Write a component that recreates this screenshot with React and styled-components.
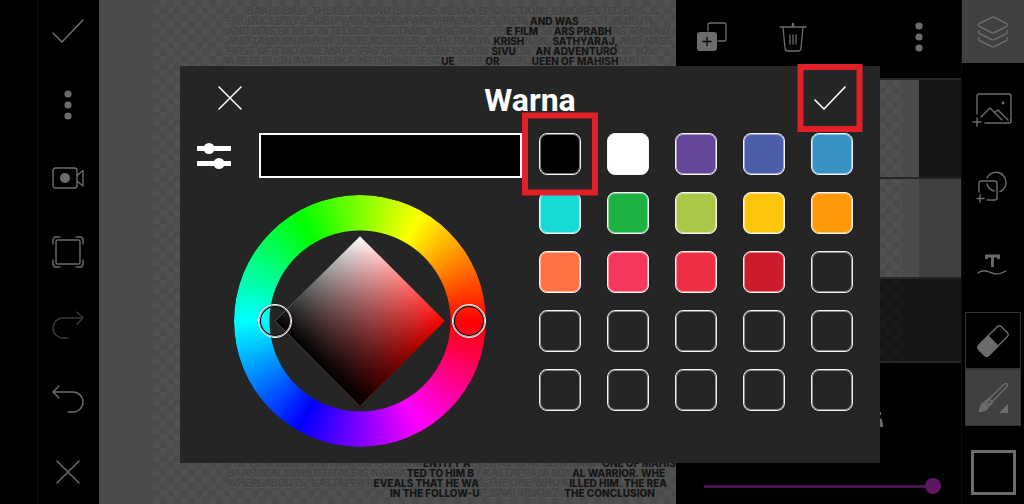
import React, { useState } from "react";
import styled, { createGlobalStyle, css } from "styled-components";

const BodyStyle = createGlobalStyle`
  * {
    box-sizing: border-box;
  }

  body {
    margin: 0;
    background-color: #000;
    color: #fff;
    font-family: Roboto, sans-serif;
  }
`;

const checker = css`
  background-image: conic-gradient(
    ${(p) => p.$light || "#515151"} 25%,
    transparent 0 50%,
    ${(p) => p.$light || "#515151"} 0 75%,
    transparent 0
  );
  background-size: 14px 14px;
`;

const Page = styled.div`
  position: relative;
  display: flex;
  height: 100vh;
  min-height: 504px;
  overflow: hidden;
`;

const Gutter = styled.div`
  flex: 0 0 38px;
  border-right: 1px solid #0c0c0c;
`;

const Toolbar = styled.nav`
  flex: 0 0 61px;
  display: flex;
  flex-direction: column;
  align-items: center;
  justify-content: space-between;
  padding: 11px 2px 12px 0;
`;

const IconButton = styled.button`
  position: relative;
  display: flex;
  align-items: center;
  justify-content: center;
  width: ${(p) => p.$size || 40}px;
  height: ${(p) => p.$size || 40}px;
  padding: 0;
  border: 0;
  background: none;
  color: ${(p) => p.$color || "#6c6c6c"};
  cursor: pointer;

  svg {
    display: block;
    flex: none;
  }
`;

const Canvas = styled.main`
  flex: 1;
  min-width: 0;
  display: flex;
  background-color: #4b4b4b;
`;

const Artboard = styled.div`
  flex: 1;
  min-width: 0;
  margin-left: 54px;
  padding: 6px 0 6px 74px;
  display: flex;
  flex-direction: column;
  justify-content: space-between;
  ${checker}
`;

const Paragraph = styled.p`
  margin: 0;
  font: 700 10px/10px Inter, sans-serif;
  color: #454545;
  text-shadow: 0 1px #5a5a5a;
`;

const Line = styled.span`
  display: flex;
  padding-left: ${(p) => p.$indent || 0}px;
  white-space: pre;
`;

const Ink = styled.span`
  font-weight: 800;
  color: #151515;
  text-shadow: none;
`;

const Panel = styled.aside`
  flex: 0 0 285px;
  display: flex;
  flex-direction: column;
  background-color: #000;
`;

const PanelBar = styled.div`
  flex: 0 0 78px;
  display: flex;
  align-items: flex-start;
  padding: 17px 22px 0 16px;
`;

const Spacer = styled.div`
  flex: ${(p) => (p.$width ? `0 0 ${p.$width}px` : "1")};
`;

const LayerRow = styled.div`
  height: ${(p) => p.$height}px;
  display: flex;
  border-top: 2px solid #262626;
  background-color: ${(p) => (p.$active ? "#404040" : "#161616")};
`;

const Thumb = styled.div`
  width: 243px;
  padding-right: 17px;
  background-color: ${(p) => (p.$empty ? "#161616" : "#4b4b4b")};
`;

const ThumbArt = styled.div`
  height: 100%;
  ${checker}
`;

const PanelFooter = styled.div`
  flex: 1;
  display: flex;
  flex-direction: column;
  justify-content: space-between;
  padding: 44px 20px 10px 28px;
  border-top: 2px solid #262626;
`;

const BrushOptions = styled.div`
  display: flex;
  padding-left: 163px;
`;

const Range = styled.input`
  appearance: none;
  width: 100%;
  height: 16px;
  margin: 0;
  background: linear-gradient(#4a124c, #4a124c) center / 100% 3px no-repeat;

  &::-webkit-slider-thumb {
    appearance: none;
    width: 16px;
    height: 16px;
    border-radius: 50%;
    background-color: #5c1760;
  }
`;

const Tools = styled.nav`
  flex: 0 0 63px;
  display: flex;
  flex-direction: column;
  align-items: center;
  border-left: 1px solid #0c0c0c;
  background-color: #000;
`;

const LayersTab = styled(IconButton)`
  width: 100%;
  height: 63px;
  background-color: #404040;
`;

const ToolList = styled.div`
  flex: 1;
  display: flex;
  flex-direction: column;
  justify-content: space-around;
  padding: 8px 2px 8px 0;
`;

const ToolBox = styled(IconButton)`
  width: 56px;
  height: 57px;
  border: 1px solid #333;
  background-color: ${(p) => (p.$active ? "#404040" : "#000")};
`;

const ActiveColor = styled.button`
  width: 45px;
  height: 45px;
  margin: 24px 0 9px;
  border: 3px solid #6c6c6c;
  background-color: #000;
`;

const Overlay = styled.div`
  position: absolute;
  inset: 0;
  display: grid;
  place-items: center;
  padding: 25px 0 0 36px;
`;

const Dialog = styled.section`
  width: 700px;
  max-width: 100%;
  background-color: #252525;
`;

const DialogHeader = styled.header`
  display: grid;
  grid-template-columns: 1fr auto 1fr;
  align-items: start;
  height: 67px;
  padding: 9px 27px 0;

  > :last-child {
    justify-self: end;
  }
`;

const Title = styled.h1`
  margin: 0;
  font: 700 32px/50px Roboto, sans-serif;
`;

const DialogBody = styled.div`
  display: flex;
  gap: 17px;
  padding: 0 27px 16px 17px;
`;

const Mixer = styled.div`
  flex: 1;
  display: flex;
  flex-direction: column;
  align-items: center;
  gap: 17px;
`;

const PreviewRow = styled.div`
  display: flex;
  align-items: center;
  gap: 28px;
  width: 100%;
`;

const Preview = styled.div`
  flex: 1;
  height: 45px;
  border: 2px solid #fff;
`;

const Wheel = styled.div`
  position: relative;
  display: grid;
  place-items: center;
  width: 252px;
  height: 252px;
`;

const HueRing = styled.div`
  position: absolute;
  inset: 0;
  border-radius: 50%;
  background: conic-gradient(
    from 90deg,
    #f00,
    #f0f,
    #00f,
    #0ff,
    #0f0,
    #ff0,
    #f00
  );
  mask: radial-gradient(circle, transparent 90px, #000 91px);
`;

const Shade = styled.div`
  width: 120px;
  height: 120px;
  background: linear-gradient(to top, #000, transparent),
    linear-gradient(to right, #fff, #f00);
  transform: rotate(45deg);
`;

const Handle = styled.button`
  position: absolute;
  top: 109px;
  ${(p) => p.$side}: ${(p) => (p.$side === "left" ? 24 : 0)}px;
  width: 34px;
  height: 34px;
  padding: 0;
  border: 1px solid #fff;
  border-radius: 50%;
  background: none;
  box-shadow: inset 0 0 0 1px #bbb, inset 0 0 0 2px #000;
`;

const Swatches = styled.div`
  display: grid;
  grid-template-columns: repeat(5, 42px);
  grid-auto-rows: 42px;
  gap: 17px 26px;
`;

const Swatch = styled.button`
  position: relative;
  padding: 0;
  border: 1px solid #f4f4f4;
  border-radius: 8px;
  box-shadow: inset 0 0 0 1px rgba(255, 255, 255, 0.45);
  background-color: ${(p) => p.$color || "transparent"};
  z-index: ${(p) => (p.$raised ? 1 : 0)};
`;

// red marker frame around a control
const Marker = styled.span`
  position: absolute;
  top: 50%;
  left: 50%;
  width: ${(p) => p.$width}px;
  height: ${(p) => p.$height}px;
  border: 6px solid #e32028;
  transform: translate(-50%, -50%);
  pointer-events: none;
`;

const Icon = ({ w, h, stroke = 1.4, children }) => (
  <svg
    width={w}
    height={h}
    viewBox={`0 0 ${w} ${h}`}
    fill="none"
    stroke="currentColor"
    strokeWidth={stroke}
    strokeLinecap="round"
    strokeLinejoin="round"
    aria-hidden="true"
  >
    {children}
  </svg>
);

const Check = () => (
  <Icon w={32} h={24} stroke={1.6}>
    <path d="M1 14 10 23 31 1" />
  </Icon>
);

const Close = () => (
  <Icon w={24} h={24} stroke={1.5}>
    <path d="M1 1 23 23M23 1 1 23" />
  </Icon>
);

const Dots = () => (
  <Icon w={8} h={30}>
    <g fill="currentColor" stroke="none">
      <circle cx="4" cy="4" r="3.6" />
      <circle cx="4" cy="15" r="3.6" />
      <circle cx="4" cy="26" r="3.6" />
    </g>
  </Icon>
);

const Camera = () => (
  <Icon w={32} h={22}>
    <rect x="1" y="1" width="24" height="20" rx="2.5" />
    <circle cx="13" cy="11" r="5" fill="currentColor" stroke="none" />
    <path d="M25.500 8 31 3.500V19L25.500 14.500" />
  </Icon>
);

const Frame = () => (
  <Icon w={32} h={32}>
    <rect x="4" y="4" width="24" height="24" rx="1.500" />
    <path d="M1 8V4a3 3 0 0 1 3-3h4M24 1h4a3 3 0 0 1 3 3v4M31 24v4a3 3 0 0 1-3 3h-4M8 31H4a3 3 0 0 1-3-3v-4" />
  </Icon>
);

const Redo = () => (
  <Icon w={32} h={28}>
    <path d="M16 27h-5A10 10 0 0 1 11 7h20M25 1l6 6-6 6" />
  </Icon>
);

const Undo = () => (
  <Icon w={32} h={28}>
    <path d="M16 27h5A10 10 0 0 0 21 7H1M7 1 1 7l6 6" />
  </Icon>
);

const AddLayer = () => (
  <Icon w={30} h={30} stroke={1.3}>
    <path d="M11 9V3a2 2 0 0 1 2-2h14a2 2 0 0 1 2 2v14a2 2 0 0 1-2 2h-6" />
    <rect x="0" y="10" width="20" height="19" rx="3" fill="currentColor" stroke="none" />
    <path d="M10 15.500v8M6 19.500h8" stroke="#000" />
  </Icon>
);

const Trash = () => (
  <Icon w={28} h={30} stroke={1.3}>
    <path d="M1 5h26M4 5l2 21a3 3 0 0 0 3 3h10a3 3 0 0 0 3-3L24 5" />
    <path d="M14 2v2" strokeWidth="2.400" />
    <path d="M11 13v9M14 13v9M17 13v9" />
  </Icon>
);

const Layers = () => (
  <Icon w={32} h={32}>
    <path d="M14.500 1.500a3 3 0 0 1 3 0l12 6q2.500 1.500 0 3l-12 6a3 3 0 0 1-3 0l-12-6q-2.500-1.500 0-3z" />
    <path d="M2.500 14.500q-2.500 1.500 0 3l12 6a3 3 0 0 0 3 0l12-6q2.500-1.500 0-3" />
    <path d="M2.500 21.500q-2.500 1.500 0 3l12 6a3 3 0 0 0 3 0l12-6q2.500-1.500 0-3" />
  </Icon>
);

const AddImage = () => (
  <Icon w={40} h={34}>
    <path d="M5 21V3a2 2 0 0 1 2-2h30a2 2 0 0 1 2 2v25a2 2 0 0 1-2 2H13" />
    <path d="M9 24l9-9 12 12M23 19l3-2 10 10M5 25v8M1 29h8" />
    <circle cx="31" cy="10" r="1.400" fill="currentColor" stroke="none" />
  </Icon>
);

const AddShape = () => (
  <Icon w={32} h={32}>
    <path d="M3 21v-9a2 2 0 0 1 2-2h14a2 2 0 0 1 2 2v15a2 2 0 0 1-2 2h-8M4 24v7M1 27.500h7" />
    <path d="M11 7A10 10 0 1 1 24 20.500M11 13a10 10 0 0 0 7 7" />
  </Icon>
);

const TextCurve = () => (
  <Icon w={30} h={22}>
    <path d="M9.500 5V2h12v3M15.500 2v11" strokeWidth="2.800" strokeLinecap="butt" strokeLinejoin="miter" />
    <path d="M1 19c5-4 9-2 14 0s9 1 14-2" />
  </Icon>
);

const Eraser = () => (
  <Icon w={32} h={32}>
    <g transform="rotate(45 16 16)">
      <rect x="9" y="0" width="14" height="32" rx="3" />
      <path d="M9 16h14v13a3 3 0 0 1-3 3h-8a3 3 0 0 1-3-3z" fill="currentColor" />
    </g>
  </Icon>
);

const Brush = () => (
  <Icon w={32} h={32}>
    <path d="M12 17 27.500 2a1.500 1.500 0 0 1 2.500 2.500L15 20" />
    <path d="M12 16.500l-4 3 4.500 4.500 3-4z" fill="currentColor" />
    <circle cx="12" cy="20" r="1.200" fill="#404040" stroke="none" />
    <path d="M1 30c2-2 1-6 4-9l2-1 5 5c-1 4-6 5-11 5z" fill="currentColor" stroke="none" />
    <path d="M31 22v9h-9z" fill="currentColor" stroke="none" />
  </Icon>
);

const Sliders = () => (
  <Icon w={34} h={26}>
    <g fill="currentColor" stroke="none">
      <rect x="0" y="3" width="34" height="5" />
      <circle cx="12" cy="5.500" r="5.500" />
      <rect x="0" y="18" width="34" height="5" />
      <circle cx="22" cy="20.500" r="5.500" />
    </g>
  </Icon>
);

const LEFT_TOOLS = [
  { label: "Done", icon: Check },
  { label: "More", icon: Dots },
  { label: "Record", icon: Camera },
  { label: "Fit", icon: Frame },
  { label: "Redo", icon: Redo, color: "#393939" },
  { label: "Undo", icon: Undo },
  { label: "Discard", icon: Close },
];

const SWATCHES = [
  "#000000", "#ffffff", "#64469b", "#4c5eaa", "#3a92c4",
  "#18dcd4", "#1cb141", "#abc747", "#fec50d", "#ff990a",
  "#ff7043", "#f6375d", "#ee2e42", "#cd1b2b", null,
  null, null, null, null, null,
  null, null, null, null, null,
];

// parts alternate: faint, inked, faint, inked ...
const TOP_TEXT = [
  { indent: 20, parts: ["BAAHUBALI: THE BEGINNING IS A 2015 INDIAN EPIC ACTION FILM DIRECTED BY S. S."] },
  { parts: ["PRODUCED BY SHOBU YARLAGADDA AND PRASAD DEVINENI ", "AND WAS", " SHOT IN BOTH"] },
  { parts: ["AND WAS FILMED IN TELUGU AND TAMIL LANGUAGE. TH", "E FILM ", "ST", "ARS PRABH", "AS, RANA D"] },
  { parts: ["AND TAMANNAAH IN THE LEAD ROLES, WITH RAMYA ", "KRISH", "NAN, ", "SATHYARAJ, ", "AND NASS"] },
  { parts: ["FIRST OF TWO CINEMATIC PARTS, THE FILM FOLLOW ", "SIVU", "DU, ", "AN ADVENTURO", "US YOU"] },
  { parts: ["A REBELLION AVANTHIKA INTENDING RESC", "UE ", "THE F", "OR", "MER Q", "UEEN OF MAHISH", "MATI"] },
];

const BOTTOM_TEXT = [
  { parts: ["THE FILM ENDS WITH KATTAPPA, HIS ID", "ENTITY A", "FTER A LOYAL SLAVE AND ", "ONE OF MAHISH"] },
  { parts: ["BAAHUBALI, WHOSE TALE IS NARRA", "TED TO HIM B", "Y KATTAPPA, A LOY", "AL WARRIOR. WHE"] },
  { parts: ["WHEREABOUTS, KATTAPPA R", "EVEALS THAT HE WA", "S THE ONE WHO K", "ILLED HIM. THE REA"] },
  { indent: 163, parts: ["", "IN THE FOLLOW-U", "P, BAAHUBALI 2: ", "THE CONCLUSION"] },
];

const Copy = ({ lines }) => (
  <Paragraph>
    {lines.map(({ indent, parts }, i) => (
      <Line key={i} $indent={indent}>
        {parts.map((part, j) =>
          j % 2 ? <Ink key={j}>{part}</Ink> : <span key={j}>{part}</span>
        )}
      </Line>
    ))}
  </Paragraph>
);

export default function App() {
  const [color, setColor] = useState("#000000");
  const [opacity, setOpacity] = useState(100);

  return (
    <>
      <BodyStyle />
      <Page>
        <Gutter />
        <Toolbar>
          {LEFT_TOOLS.map(({ label, icon: Glyph, color: tint }) => (
            <IconButton key={label} aria-label={label} $color={tint}>
              <Glyph />
            </IconButton>
          ))}
        </Toolbar>

        <Canvas>
          <Artboard>
            <Copy lines={TOP_TEXT} />
            <Copy lines={BOTTOM_TEXT} />
          </Artboard>
        </Canvas>

        <Panel>
          <PanelBar>
            <IconButton aria-label="Add layer">
              <AddLayer />
            </IconButton>
            <Spacer $width={41} />
            <IconButton aria-label="Delete layer">
              <Trash />
            </IconButton>
            <Spacer />
            <IconButton aria-label="Layer options">
              <Dots />
            </IconButton>
          </PanelBar>
          <LayerRow $height={99}>
            <Thumb>
              <ThumbArt />
            </Thumb>
          </LayerRow>
          <LayerRow $height={100} $active>
            <Thumb>
              <ThumbArt />
            </Thumb>
          </LayerRow>
          <LayerRow $height={84}>
            <Thumb $empty>
              <ThumbArt $light="#1a1a1a" />
            </Thumb>
          </LayerRow>
          <PanelFooter>
            <BrushOptions>
              <svg width="18" height="22" fill="#6c6c6c" aria-hidden="true">
                <path d="M10 5h4v3h-4zM9 20c0-5 1-9 3-9 3 0 4 3 4 9z" />
              </svg>
            </BrushOptions>
            <Range
              type="range"
              aria-label="Opacity"
              value={opacity}
              onChange={(e) => setOpacity(Number(e.target.value))}
            />
          </PanelFooter>
        </Panel>

        <Tools>
          <LayersTab aria-label="Layers">
            <Layers />
          </LayersTab>
          <ToolList>
            <IconButton aria-label="Add image">
              <AddImage />
            </IconButton>
            <IconButton aria-label="Add shape">
              <AddShape />
            </IconButton>
            <IconButton aria-label="Add text">
              <TextCurve />
            </IconButton>
          </ToolList>
          <ToolBox aria-label="Eraser">
            <Eraser />
          </ToolBox>
          <ToolBox aria-label="Brush" $active>
            <Brush />
          </ToolBox>
          <ActiveColor aria-label="Brush color" />
        </Tools>

        <Overlay>
          <Dialog role="dialog" aria-labelledby="color-title">
            <DialogHeader>
              <IconButton aria-label="Close" $size={46} $color="#fff">
                <Close />
              </IconButton>
              <Title id="color-title">Warna</Title>
              <IconButton aria-label="Apply" $size={46} $color="#fff">
                <Check />
                <Marker $width={65} $height={68} />
              </IconButton>
            </DialogHeader>
            <DialogBody>
              <Mixer>
                <PreviewRow>
                  <IconButton aria-label="Sliders" $size={34} $color="#fff">
                    <Sliders />
                  </IconButton>
                  <Preview style={{ backgroundColor: color }} />
                </PreviewRow>
                <Wheel>
                  <HueRing />
                  <Shade />
                  <Handle aria-label="Shade" $side="left" />
                  <Handle aria-label="Hue" $side="right" />
                </Wheel>
              </Mixer>
              <Swatches>
                {SWATCHES.map((c, i) => (
                  <Swatch
                    key={i}
                    $color={c}
                    $raised={i === 0}
                    aria-label={c || "Empty swatch"}
                    onClick={() => c && setColor(c)}
                  >
                    {i === 0 && <Marker $width={76} $height={83} />}
                  </Swatch>
                ))}
              </Swatches>
            </DialogBody>
          </Dialog>
        </Overlay>
      </Page>
    </>
  );
}
